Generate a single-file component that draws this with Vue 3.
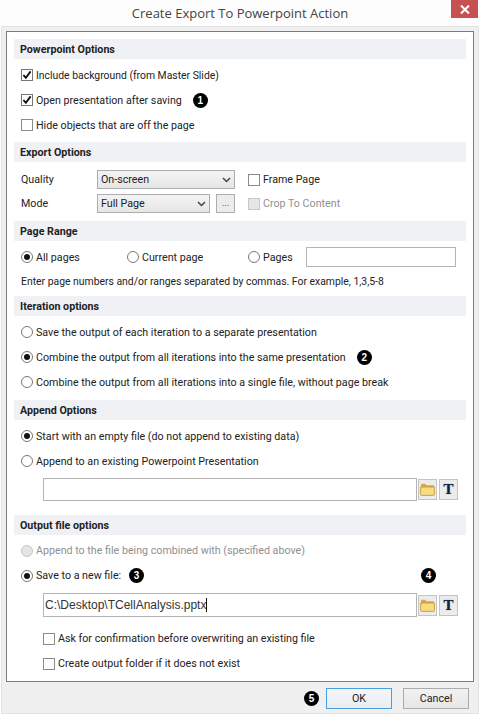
<script setup>
const iterationOptions = [
  { label: 'Save the output of each iteration to a separate presentation', on: false },
  { label: 'Combine the output from all iterations into the same presentation', on: true, badge: 2 },
  { label: 'Combine the output from all iterations into a single file, without page break', on: false },
]
</script>

<template>
  <div class="window">
    <div class="titlebar">
      <span class="title">Create Export To Powerpoint Action</span>
      <div class="close">
        <svg width="10" height="9" viewBox="0 0 10 9"><path d="M1 .5l8 8M9 .5l-8 8" stroke="#fff" stroke-width="2" fill="none" /></svg>
      </div>
    </div>

    <div class="frame">
      <div class="panel">
        <h3 class="head">Powerpoint Options</h3>
        <div class="rows first">
          <div class="row narrow">
            <span class="check dark"><svg width="11" height="10" viewBox="0 0 11 10"><path d="M1.5 5l2.7 3L9.5 1" stroke="#111" stroke-width="2" fill="none" /></svg></span>
            Include background (from Master Slide)
          </div>
          <div class="row">
            <span class="check dark"><svg width="11" height="10" viewBox="0 0 11 10"><path d="M1.5 5l2.7 3L9.5 1" stroke="#111" stroke-width="2" fill="none" /></svg></span>
            Open presentation after saving
            <span class="badge b1">1</span>
          </div>
          <div class="row"><span class="check"></span>Hide objects that are off the page</div>
        </div>

        <h3 class="head">Export Options</h3>
        <div class="export">
          <span>Quality</span>
          <div class="select">On-screen
            <svg width="9" height="6" viewBox="0 0 9 6"><path d="M1 1l3.5 3.5L8 1" stroke="#444" stroke-width="1.5" fill="none" /></svg>
          </div>
          <div class="inline side"><span class="check"></span>Frame Page</div>
          <span>Mode</span>
          <div class="mode">
            <div class="select">Full Page
              <svg width="9" height="6" viewBox="0 0 9 6"><path d="M1 1l3.5 3.5L8 1" stroke="#444" stroke-width="1.5" fill="none" /></svg>
            </div>
            <div class="dots">...</div>
          </div>
          <div class="inline side muted"><span class="check off"></span>Crop To Content</div>
        </div>

        <h3 class="head">Page Range</h3>
        <div class="range">
          <div class="inline col1"><span class="radio on"></span>All pages</div>
          <div class="inline col2"><span class="radio"></span>Current page</div>
          <div class="inline col3"><span class="radio"></span>Pages</div>
          <div class="field pages"></div>
        </div>
        <p class="hint">Enter page numbers and/or ranges separated by commas. For example, 1,3,5-8</p>

        <h3 class="head">Iteration options</h3>
        <div class="rows iter">
          <div v-for="opt in iterationOptions" :key="opt.label" class="row">
            <span class="radio" :class="{ on: opt.on }"></span>
            {{ opt.label }}
            <span v-if="opt.badge" class="badge b2">{{ opt.badge }}</span>
          </div>
        </div>

        <h3 class="head">Append Options</h3>
        <div class="rows tight">
          <div class="row"><span class="radio on"></span>Start with an empty file (do not append to existing data)</div>
          <div class="row"><span class="radio"></span>Append to an existing Powerpoint Presentation</div>
        </div>
        <div class="filerow">
          <div class="field grow"></div>
          <div class="iconbtn">
            <svg width="15" height="13" viewBox="0 0 15 13"><path d="M1 3V1.6C1 1 1.4.7 2 .7h3.2l1.2 1.6H13c.6 0 1 .4 1 1V4H1z" fill="#d9ab3e" /><path d="M.6 4h13.8v7.4c0 .6-.4 1-1 1H1.6c-.6 0-1-.4-1-1z" fill="#f6dc83" stroke="#c2922c" stroke-width=".8" /></svg>
          </div>
          <div class="iconbtn t">T</div>
        </div>

        <h3 class="head out">Output file options</h3>
        <div class="rows tight">
          <div class="row muted"><span class="radio off"></span>Append to the file being combined with (specified above)</div>
          <div class="row">
            <span class="radio on"></span>
            Save to a new file:
            <span class="badge b3">3</span>
            <span class="badge b4">4</span>
          </div>
        </div>
        <div class="filerow second">
          <div class="field grow path">C:\Desktop\TCellAnalysis.pptx<span class="caret"></span></div>
          <div class="iconbtn">
            <svg width="15" height="13" viewBox="0 0 15 13"><path d="M1 3V1.6C1 1 1.4.7 2 .7h3.2l1.2 1.6H13c.6 0 1 .4 1 1V4H1z" fill="#d9ab3e" /><path d="M.6 4h13.8v7.4c0 .6-.4 1-1 1H1.6c-.6 0-1-.4-1-1z" fill="#f6dc83" stroke="#c2922c" stroke-width=".8" /></svg>
          </div>
          <div class="iconbtn t">T</div>
        </div>
        <div class="rows sub">
          <div class="row"><span class="check"></span>Ask for confirmation before overwriting an existing file</div>
          <div class="row"><span class="check"></span>Create output folder if it does not exist</div>
        </div>
      </div>

      <div class="footer">
        <span class="badge b5">5</span>
        <button class="btn primary">OK</button>
        <button class="btn">Cancel</button>
      </div>
    </div>
  </div>
</template>

<style scoped>
.window {
  width: 480px;
  height: 718px;
  background: #fff;
  font-family: Roboto, "Open Sans", sans-serif;
  font-size: 10.7px;
  color: #222;
  overflow: hidden;
}

/* title */
.titlebar {
  position: relative;
  height: 26px;
  display: flex;
  align-items: center;
  justify-content: center;
  background: #fdfdfd;
}
.title {
  font-family: "Open Sans", sans-serif;
  font-size: 13px;
  color: #444;
}
.close {
  position: absolute;
  top: 0;
  right: 2px;
  width: 27px;
  height: 18px;
  background: #c75050;
  display: flex;
  align-items: center;
  justify-content: center;
}

/* frame */
.frame {
  margin: 0 1px;
  height: 688px;
  box-sizing: border-box;
  padding: 4px 4px 0;
  background: #f0f0f0;
  border: 1px solid #e2e2e2;
}
.panel {
  height: 651px;
  box-sizing: border-box;
  padding: 7px 7px 0;
  background: #fff;
  border: 1px solid #7c7c7c;
}
.head {
  margin: 0;
  height: 20px;
  padding-left: 6px;
  line-height: 21px;
  font-size: 10.7px;
  font-weight: 700;
  color: #222;
  background: #f0f1f5;
}
.head.out {
  margin-top: 14px;
}
.rows {
  padding: 3.5px 0 3.5px 7px;
}
.rows.first {
  padding-bottom: 4.5px;
}
.rows.iter {
  padding-bottom: 5.5px;
}
.rows.tight {
  padding-bottom: 0;
}
.rows.sub {
  padding: 9px 0 0 29px;
}
.row {
  height: 25px;
  display: flex;
  align-items: center;
  white-space: nowrap;
}
.row.narrow {
  font-size: 10.4px;
}
.inline {
  display: flex;
  align-items: center;
}
.muted {
  color: #8f8f8f;
}

/* checks and radios */
.check {
  width: 10px;
  height: 10px;
  margin-right: 3px;
  flex: none;
  display: flex;
  align-items: center;
  justify-content: center;
  border: 1px solid #8a8a8a;
  background: #fff;
}
.check.dark {
  border-color: #777;
}
.check.off {
  background: #e6e6e6;
  border-color: #c8c8c8;
}
.radio {
  position: relative;
  width: 10px;
  height: 10px;
  margin-right: 3px;
  flex: none;
  border: 1px solid #777;
  border-radius: 50%;
  background: #fff;
}
.radio.on::after {
  content: "";
  position: absolute;
  inset: 2px;
  border-radius: 50%;
  background: #111;
}
.radio.off {
  background: #e4e4e4;
  border-color: #c4c4c4;
}

/* export */
.export {
  display: grid;
  grid-template-columns: 76px 138px auto;
  grid-auto-rows: 19px;
  row-gap: 5px;
  padding: 8px 0 8px 7px;
  align-items: center;
}
.side {
  padding-left: 13px;
}
.select {
  height: 19px;
  flex: 1;
  box-sizing: border-box;
  display: flex;
  align-items: center;
  justify-content: space-between;
  padding: 0 3px 0 3px;
  border: 1px solid #adadad;
  background: linear-gradient(#f3f3f3, #e6e6e6);
  color: #222;
}
.mode {
  display: flex;
  gap: 6px;
}
.dots {
  width: 19px;
  height: 19px;
  box-sizing: border-box;
  border: 1px solid #adadad;
  background: #ececec;
  text-align: center;
  font-size: 9px;
  line-height: 17px;
}

/* range */
.range {
  display: flex;
  align-items: center;
  height: 20px;
  margin-top: 6px;
  padding-left: 7px;
}
.col1 { width: 106px; }
.col2 { width: 121px; }
.col3 { width: 58px; }
.field {
  box-sizing: border-box;
  border: 1px solid #b4b4b4;
  background: #fff;
}
.field.pages {
  width: 150px;
  height: 20px;
}
.hint {
  margin: 0;
  height: 29px;
  padding: 7px 0 0 7px;
  box-sizing: border-box;
  font-size: 10.4px;
  line-height: 15px;
}

/* file rows */
.filerow {
  display: flex;
  align-items: center;
  height: 23px;
  margin: 4px 8px 0 29px;
}
.filerow.second {
  height: 24px;
  margin-top: 5px;
}
.field.grow {
  width: 374px;
  height: 100%;
}
.path {
  display: flex;
  align-items: center;
  padding-left: 1px;
  font-family: "Liberation Sans", Arial, sans-serif;
  font-size: 12px;
  color: #333;
}
.caret {
  width: 1px;
  height: 14px;
  background: #111;
}
.iconbtn {
  width: 19px;
  height: 21px;
  margin-left: 1px;
  box-sizing: border-box;
  display: flex;
  align-items: center;
  justify-content: center;
  border: 1px solid #c4c4c4;
  background: #ececec;
}
.iconbtn.t {
  margin-left: 2px;
  font-family: "Liberation Serif", serif;
  font-size: 15px;
  font-weight: 700;
  color: #13233a;
  text-shadow: 0 0 1px #3b82c4;
}

/* numbered markers */
.badge {
  width: 15px;
  height: 15px;
  display: inline-flex;
  align-items: center;
  justify-content: center;
  flex: none;
  border-radius: 50%;
  background: #000;
  color: #fff;
  font-family: "Liberation Sans", Arial, sans-serif;
  font-size: 10px;
  font-weight: 700;
}
.b1 { margin-left: 11px; }
.b2 { margin-left: 11px; }
.b3 { margin-left: 8px; }
.b4 { margin-left: auto; margin-right: 30px; }
.b5 { margin-right: 7px; }

/* footer */
.footer {
  height: 32px;
  display: flex;
  align-items: center;
  justify-content: flex-end;
  padding-right: 5px;
}
.btn {
  width: 66px;
  height: 21px;
  padding: 0;
  font: inherit;
  color: #222;
  border: 1px solid #ababab;
  background: linear-gradient(#f2f2f2, #e6e6e6);
}
.btn.primary {
  margin-right: 11px;
  border-color: #4a9fe0;
  background: linear-gradient(#f3f6fa, #e9edf2);
}
</style>

<style>
body {
  margin: 0;
  background: #fff;
}
</style>
